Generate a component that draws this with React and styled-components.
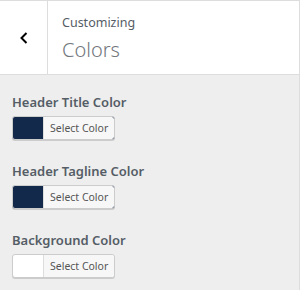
import React from 'react'
import styled, { createGlobalStyle } from 'styled-components'

const GlobalStyle = createGlobalStyle`
    html, body {
        margin: 0;
        padding: 0;
        background: #eee;
        font-family: "Noto Sans", "Open Sans", sans-serif;
    }
`;

const Panel = styled.div`
    width: 299px;
    height: 290px;
    border-right: 1px solid #ddd;
    background: #eee;
    overflow: hidden;
`;

const SectionHeader = styled.div`
    display: flex;
    height: 73px;
    background: #fff;
    border-top: 1px solid #ddd;
    border-bottom: 1px solid #ddd;
`;

const BackButton = styled.button`
    display: flex;
    align-items: center;
    justify-content: center;
    width: 48px;
    padding: 0;
    background: #fff;
    border: none;
    border-right: 1px solid #ddd;
    color: #000;
    cursor: pointer;
`;

const TitleBlock = styled.div`
    padding: 10px 14px;
    color: #555d66;
`;

const Action = styled.span`
    display: block;
    font-size: 12.5px;
    line-height: 24px;
`;

const Title = styled.h3`
    margin: 0;
    font-size: 20px;
    font-weight: 300;
    line-height: 29px;
    color: #72777c;
`;

const Controls = styled.ul`
    list-style: none;
    margin: 0;
    padding: 17px 12px 0;
    display: flex;
    flex-direction: column;
    gap: 21px;
`;

const Control = styled.li`
    display: flex;
    flex-direction: column;
    align-items: flex-start;
`;

const Label = styled.span`
    font-size: 13px;
    font-weight: 600;
    line-height: 20px;
    color: #555d66;
    margin-bottom: 4px;
`;

const ColorResult = styled.button`
    display: flex;
    height: 24px;
    padding: 0 0 0 30px;
    border: 1px solid #ccc;
    border-radius: 3px;
    box-shadow: 0 1px 0 #ccc;
    background: ${p => p.$color};
    box-sizing: border-box;
    cursor: pointer;
    overflow: hidden;
`;

const ResultText = styled.span`
    display: block;
    padding: 0 6px;
    line-height: 22px;
    font-family: "Noto Sans", "Open Sans", sans-serif;
    font-size: 10.5px;
    color: #555;
    background: #f7f7f7;
    border-left: 1px solid #ddd;
    border-radius: 0 2px 2px 0;
`;

const ChevronLeft = () => (
    <svg width="20" height="20" viewBox="0 0 20 20">
        <path d="M12.5 5 L7.5 10 L12.5 15" fill="none" stroke="#000" strokeWidth="2" />
    </svg>
)

const colors = [
    { label: 'Header Title Color', value: '#13294b' },
    { label: 'Header Tagline Color', value: '#13294b' },
    { label: 'Background Color', value: '#ffffff' },
]

const App = () => {
    return (
        <>
            <GlobalStyle />
            <Panel>
                <SectionHeader>
                    <BackButton aria-label="Back">
                        <ChevronLeft />
                    </BackButton>
                    <TitleBlock>
                        <Action>Customizing</Action>
                        <Title>Colors</Title>
                    </TitleBlock>
                </SectionHeader>
                <Controls>
                    {colors.map(c => (
                        <Control key={c.label}>
                            <Label>{c.label}</Label>
                            <ColorResult $color={c.value}>
                                <ResultText>Select Color</ResultText>
                            </ColorResult>
                        </Control>
                    ))}
                </Controls>
            </Panel>
        </>
    )
}

export default App
